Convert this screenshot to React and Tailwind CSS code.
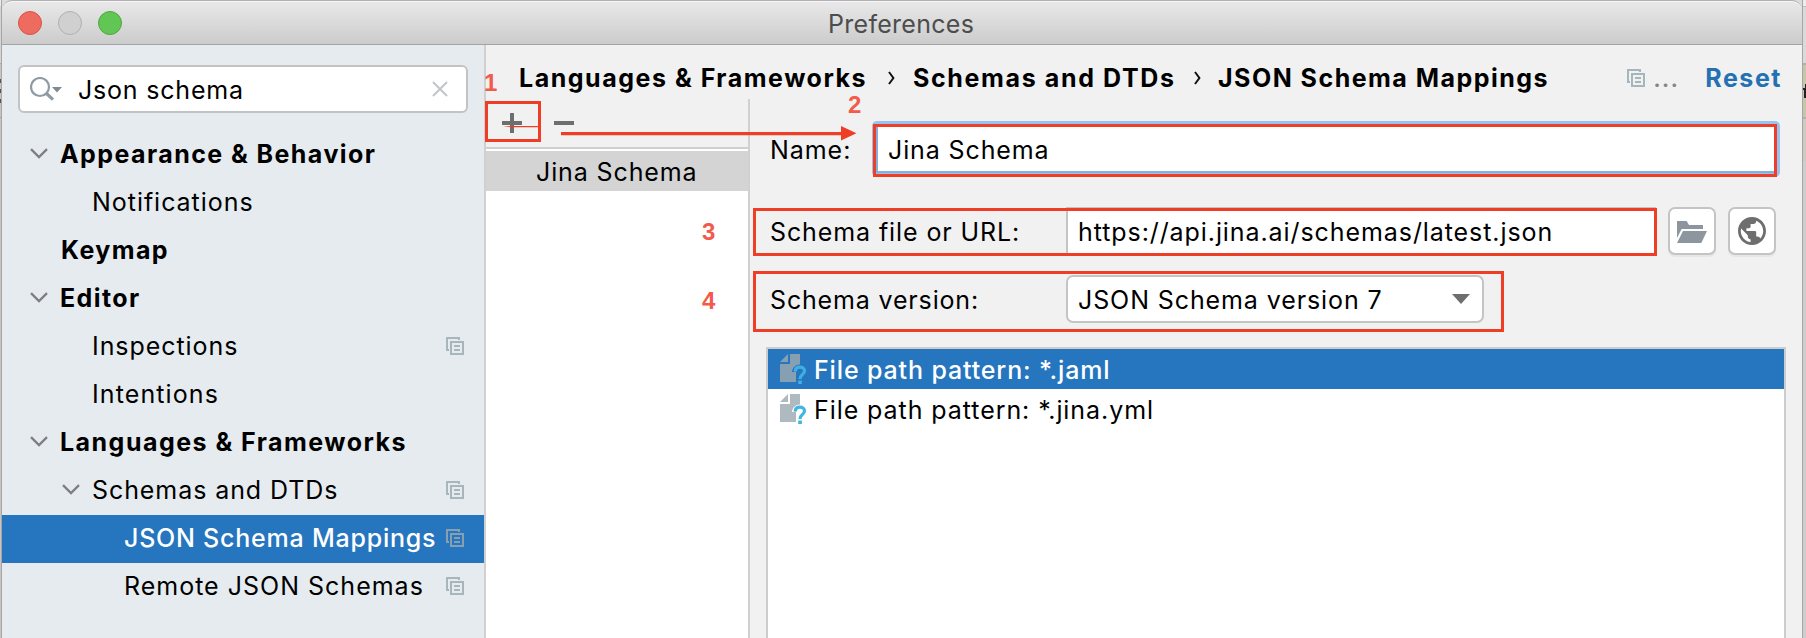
import React from 'react';

function CopyIcon({ className = 'text-[#a7b5bd]' }) {
  return (
    <svg width="18" height="18" viewBox="0 0 18 18" className={`shrink-0 ${className}`} fill="currentColor">
      <path d="M0 0H14V3H12V2H2V12H3V14H0Z" />
      <path fillRule="evenodd" d="M4 4H18V18H4ZM6 6V16H16V6Z" />
      <path d="M8 8H14V10H8ZM8 12H14V14H8Z" />
    </svg>
  );
}

function Chevron() {
  return (
    <svg width="18" height="11" viewBox="0 0 18 11" className="shrink-0" fill="none" stroke="#7f7f7f" strokeWidth="2.4">
      <path d="M1 1.2L9 9L17 1.2" />
    </svg>
  );
}

function FileIcon({ page, mark }) {
  return (
    <svg width="27" height="30" viewBox="0 0 27 30" className="shrink-0">
      <path fill={page} d="M8 0V8H0ZM10 0H20V10.4C15.6 10.6 12.4 13.4 12 18H16V28H0V10H10Z" />
      <path fill="none" stroke={mark} strokeWidth="3.2" d="M15.2 17.6C15.3 14.8 17.2 13.2 19.9 13.2C22.6 13.2 24.5 14.8 24.5 17.1C24.5 20.4 20 20.6 20 25" />
      <path fill={mark} d="M18.2 26.5H21.9V30H18.2Z" />
    </svg>
  );
}

const tree = [
  { label: 'Appearance & Behavior', cls: 'ml-[12px] font-bold tracking-[1.43px]', indent: 'pl-[28px]', open: true },
  { label: 'Notifications', cls: 'tracking-[0.96px]', indent: 'pl-[90px]' },
  { label: 'Keymap', cls: 'font-bold tracking-[1.4px]', indent: 'pl-[59px]' },
  { label: 'Editor', cls: 'ml-[12px] font-bold tracking-[1.4px]', indent: 'pl-[28px]', open: true },
  { label: 'Inspections', cls: 'tracking-[0.94px]', indent: 'pl-[90px]', copy: true },
  { label: 'Intentions', cls: 'tracking-[1.1px]', indent: 'pl-[90px]' },
  { label: 'Languages & Frameworks', cls: 'ml-[12px] font-bold tracking-[1.47px]', indent: 'pl-[28px]', open: true },
  { label: 'Schemas and DTDs', cls: 'ml-[12px] tracking-[0.92px]', indent: 'pl-[60px]', open: true, copy: true },
  { label: 'JSON Schema Mappings', cls: 'font-medium tracking-[0.77px]', indent: 'pl-[122px]', copy: true, selected: true },
  { label: 'Remote JSON Schemas', cls: 'tracking-[1px]', indent: 'pl-[122px]', copy: true },
];

function Sidebar() {
  return (
    <aside className="flex w-[484px] shrink-0 flex-col border-r-2 border-[#d0d0d0] bg-[#e6ebef] pt-5">
      <div className="ml-4 flex h-12 w-[450px] shrink-0 items-center rounded-[6px] border-2 border-[#c3c3c3] bg-white pl-[10px] pr-[18px]">
        <svg width="33" height="24" viewBox="0 0 33 24" className="shrink-0">
          <circle cx="10" cy="10" r="9" fill="none" stroke="#8f9ba4" strokeWidth="2.2" />
          <path d="M16 16L23 22.6" stroke="#8f9ba4" strokeWidth="3.2" />
          <path d="M22 10H32L27 15.6Z" fill="#7f8b91" />
        </svg>
        <span className="ml-[15px] mt-[2px] flex-1 tracking-[0.8px]">Json schema</span>
        <svg width="16" height="16" viewBox="0 0 16 16" fill="none" stroke="#bfc6ca" strokeWidth="2">
          <path d="M1 1L15 15M15 1L1 15" />
        </svg>
      </div>
      <nav className="mt-[18px] flex flex-col">
        {tree.map((row) => (
          <div
            key={row.label}
            className={`flex h-12 items-center pr-5 ${row.indent} ${row.selected ? 'bg-[#2675bf] text-white' : ''}`}
          >
            {row.open && <span className="-mt-[3px]"><Chevron /></span>}
            <span className={`flex-1 whitespace-nowrap pb-[2px] ${row.cls}`}>{row.label}</span>
            {row.copy && (
              <span className="-mt-[2px]">
                <CopyIcon className={row.selected ? 'text-[#879fb0]' : 'text-[#a7b5bd]'} />
              </span>
            )}
          </div>
        ))}
      </nav>
    </aside>
  );
}

function Separator() {
  return (
    <svg width="7" height="14" viewBox="0 0 7 14" className="shrink-0" fill="none" stroke="#111" strokeWidth="2">
      <path d="M1 1L5.4 7L1 13" />
    </svg>
  );
}

function Header() {
  return (
    <header className="flex h-[54px] shrink-0 items-center whitespace-nowrap pl-[33px] pr-[20px] pt-[12px] font-bold">
      <span className="w-[369px] tracking-[1.52px]">Languages &amp; Frameworks</span>
      <Separator />
      <span className="ml-[18px] w-[281px] tracking-[1.63px]">Schemas and DTDs</span>
      <Separator />
      <span className="ml-[17px] tracking-[1.48px]">JSON Schema Mappings</span>
      <span className="ml-auto flex items-center">
        <CopyIcon />
        <span className="ml-[8px] w-[52px] font-medium tracking-[1px] text-[#868686]">...</span>
        <span className="tracking-[1.53px] text-[#2470b3]">Reset</span>
      </span>
    </header>
  );
}

function MappingList() {
  return (
    <section className="flex w-[264px] shrink-0 flex-col border-r-2 border-[#d0d0d0]">
      <div className="flex h-[50px] shrink-0 items-start gap-8 border-b-2 border-[#cfcfcf] pl-4 pt-[14px]">
        <svg width="20" height="20" viewBox="0 0 20 20" fill="#6e6e6e"><path d="M8 0H12V8H20V12H12V20H8V12H0V8H8Z" /></svg>
        <svg width="20" height="20" viewBox="0 0 20 20" fill="#6e6e6e"><path d="M0 8H20V12H0Z" /></svg>
      </div>
      <div className="flex-1 bg-white pt-[2px]">
        <div className="flex h-10 items-center bg-[#d4d4d4] pl-[50px] pt-[2px] tracking-[0.88px]">Jina Schema</div>
      </div>
    </section>
  );
}

function Form() {
  return (
    <section className="flex min-w-0 flex-1 flex-col whitespace-nowrap">
      <div className="mt-[22px] flex h-14 items-center">
        <span className="w-[122px] pl-[20px] pt-[2px] tracking-[0.95px]">Name:</span>
        <div className="flex h-14 w-[908px] rounded-[5px] bg-[#97c3f3] p-1">
          <div className="flex flex-1 items-center border-2 border-[#87afda] bg-white pl-[10px] pt-[2px] tracking-[0.88px]">
            Jina Schema
          </div>
        </div>
      </div>
      <div className="mt-[30px] flex h-12 items-center">
        <span className="w-[316px] pl-[20px] pt-[2px] tracking-[0.9px]">Schema file or URL:</span>
        <div className="flex h-12 w-[590px] items-center border-2 border-[#c4c4c4] bg-white pl-[10px] pt-[2px] tracking-[0.92px]">
          https://api.jina.ai/schemas/latest.json
        </div>
        <button className="ml-3 flex size-12 items-center justify-center rounded-[7px] border-2 border-[#c4c4c4] bg-white shadow-[0_2px_0_#e6e6e6]">
          <svg width="30" height="22" viewBox="0 0 30 22" fill="#8d969e" className="mt-px">
            <path d="M0 0H9.6L12 4H26V8H4.6L0 17Z" />
            <path d="M6 10H30L24.3 22H0Z" />
          </svg>
        </button>
        <button className="ml-3 flex size-12 items-center justify-center rounded-[7px] border-2 border-[#c4c4c4] bg-white shadow-[0_2px_0_#e6e6e6]">
          <svg width="28" height="28" viewBox="2 2 20 20" fill="#6e6e6e">
            <path d="M12 2C6.48 2 2 6.48 2 12s4.48 10 10 10 10-4.48 10-10S17.52 2 12 2zm-1 17.93c-3.95-.49-7-3.85-7-7.93 0-.62.08-1.21.21-1.79L9 15v1c0 1.1.9 2 2 2v1.93zm6.9-2.54c-.26-.81-1-1.39-1.9-1.39h-1v-3c0-.55-.45-1-1-1H8v-2h2c.55 0 1-.45 1-1V7h2c1.1 0 2-.9 2-2v-.41c2.93 1.19 5 4.06 5 7.41 0 2.08-.8 3.97-2.1 5.39z" />
          </svg>
        </button>
      </div>
      <div className="mt-5 flex h-12 items-center">
        <span className="w-[316px] pl-[20px] pt-[2px] tracking-[0.84px]">Schema version:</span>
        <div className="flex h-12 w-[418px] items-center justify-between rounded-[7px] border-2 border-[#c4c4c4] bg-white pl-[10px] pr-[12px] tracking-[0.9px]">
          <span className="pt-[2px]">JSON Schema version 7</span>
          <svg width="18" height="10" viewBox="0 0 18 10" fill="#6e6e6e"><path d="M0 0H18L9 10Z" /></svg>
        </div>
      </div>
      <div className="ml-4 mt-6 flex w-[1020px] flex-1 flex-col border-2 border-b-0 border-[#cdcdcd] bg-white">
        <div className="flex h-10 shrink-0 items-center bg-[#2675bf] pl-3 font-medium tracking-[0.86px] text-white">
          <FileIcon page="#869fb1" mark="#40b0e2" />
          <span className="ml-[7px] pt-[2px]">File path pattern: *.jaml</span>
        </div>
        <div className="flex h-10 shrink-0 items-center pl-3 tracking-[0.93px]">
          <FileIcon page="#afb9c0" mark="#40b6e0" />
          <span className="ml-[7px] pt-[2px]">File path pattern: *.jina.yml</span>
        </div>
      </div>
    </section>
  );
}

function Annotations() {
  const box = 'absolute border-[3px] border-[#ee3e26]';
  const num = 'absolute text-[24px] leading-[24px] font-bold text-[#f25a4b] font-["Liberation_Sans",Arial,sans-serif]';
  return (
    <div className="pointer-events-none absolute inset-0">
      <div className={`${box} left-[485px] top-[101px] h-[41px] w-[56px]`} />
      <div className={`${box} left-[873px] top-[124px] h-[53px] w-[904px]`} />
      <div className={`${box} left-[753px] top-[208px] h-[48px] w-[904px]`} />
      <div className={`${box} left-[753px] top-[271px] h-[61px] w-[751px]`} />
      <svg className="absolute left-[500px] top-[120px]" width="360" height="24" viewBox="0 0 360 24" fill="#ee3e26">
        <path d="M3 6.5L12 5.9H39V7.2H12Z" />
        <path d="M61 12H341V6L356.500 13.300L341 20.500V15.200H61Z" />
      </svg>
      <span className={`${num} left-[484px] top-[71px]`}>1</span>
      <span className={`${num} left-[848px] top-[93px]`}>2</span>
      <span className={`${num} left-[702px] top-[220px]`}>3</span>
      <span className={`${num} left-[702px] top-[289px]`}>4</span>
    </div>
  );
}

export default function App() {
  return (
    <div className="relative flex h-[638px] w-[1806px] overflow-hidden bg-[#c4c4c4] font-['Inter',sans-serif] text-[25px] leading-[30px] text-black">
      <div className="flex w-[2px] shrink-0 flex-col border-r border-[#a6a6a6] bg-[#c6c6c6]">
        <div className="h-[6px] bg-[#ededed]" />
        <div className="h-[57px] bg-[#d4d4d4]" />
        <div className="h-px bg-[#a9a9a9]" />
        <div className="mt-[15px] h-[4px] bg-[#555]" />
        <div className="mt-[6px] h-[4px] bg-[#555]" />
        <div className="mt-[6px] h-[4px] bg-[#555]" />
        <div className="mt-[14px] h-px bg-[#a0a0a0]" />
      </div>
      <div className="flex w-[1800px] shrink-0 flex-col bg-[#dcdcdc]">
        <div className="flex h-[45px] shrink-0 items-center rounded-t-[10px] border-b border-t border-b-[#a3a3a3] border-t-[#b2b0b2] bg-linear-to-b from-[#e9e9e9] to-[#cccccc] pl-4 shadow-[inset_0_1px_0_#f6f6f6]">
          <div className="flex w-[100px] gap-4">
            <span className="size-6 shrink-0 rounded-full border border-[#d75448] bg-[#ee6b5f]" />
            <span className="size-6 shrink-0 rounded-full border border-[#b0b0b0] bg-[#d0d0d0]" />
            <span className="size-6 shrink-0 rounded-full border border-[#4fa73e] bg-[#62c655]" />
          </div>
          <span className="ml-[710px] pt-[3px] tracking-[0.28px] text-[#4d4d4d]">Preferences</span>
        </div>
        <div className="flex min-h-0 flex-1 bg-[#f1f1f1]">
          <Sidebar />
          <div className="flex min-w-0 flex-1 flex-col">
            <Header />
            <div className="flex min-h-0 flex-1">
              <MappingList />
              <Form />
            </div>
          </div>
        </div>
      </div>
      <div className="flex w-[4px] shrink-0 flex-col border-l border-[#a6a6a6] bg-[#cdcdcd]">
        <div className="h-[6px] bg-[#ededed]" />
        <div className="h-[57px] border-t border-[#bdbdbd] bg-[#dadada]" />
        <div className="h-[2px] bg-[#b0b0b0]" />
        <div className="flex h-[52px] flex-col items-end bg-[#c8c6a9] pt-[19px]">
          <div className="h-[4px] w-px bg-[#222]" />
          <div className="h-[2px] w-[3px] bg-[#222]" />
          <div className="h-[8px] w-[2px] bg-[#222]" />
        </div>
        <div className="h-[2px] bg-[#b0b0b0]" />
        <div className="h-[42px] bg-[#cdcbbf]" />
      </div>
      <Annotations />
    </div>
  );
}
